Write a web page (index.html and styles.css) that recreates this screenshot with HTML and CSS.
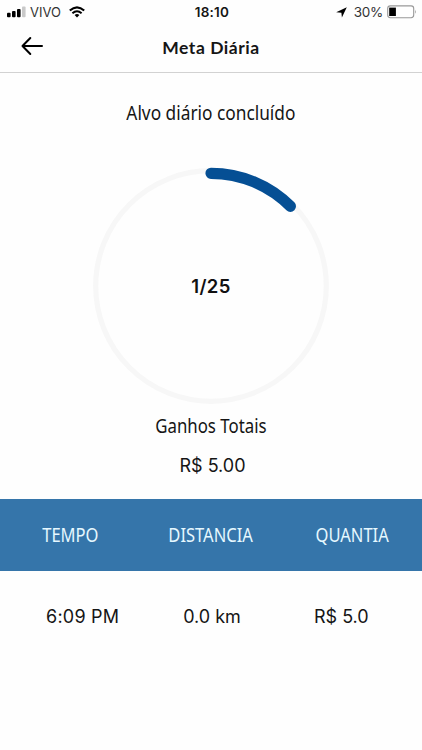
FILE: index.html
```html
<!DOCTYPE html>
<html lang="pt-BR">
<head>
  <meta charset="UTF-8" />
  <meta name="viewport" content="width=device-width, initial-scale=1" />
  <title>Meta Diária</title>
  <link rel="stylesheet" href="styles.css">
</head>
<body>
  <div class="status-bar">
    <div class="status-left">
      <svg class="signal" width="19" height="12" viewBox="0 0 19 12">
        <rect x="0" y="6.7" width="3.6" height="4.6" rx="1" />
        <rect x="5" y="5" width="3.6" height="6.3" rx="1" />
        <rect x="10" y="3" width="3.6" height="8.3" rx="1" />
        <rect x="15" y="0.5" width="3.6" height="10.8" rx="1" fill="#c9c9c9" />
      </svg>
      <span class="carrier">VIVO</span>
      <svg class="wifi" width="16" height="12" viewBox="0 0 16 12">
        <path d="M0.8 4.6 Q8 -2 15.2 4.6" fill="none" stroke="#000" stroke-width="2.1" />
        <path d="M3.4 7.3 Q8 3.2 12.6 7.3" fill="none" stroke="#000" stroke-width="2" />
        <path d="M5.6 8.9 Q8 6.9 10.4 8.9 L8 11.4 Z" />
      </svg>
    </div>
    <span class="clock">18:10</span>
    <div class="status-right">
      <svg class="location" width="11" height="11" viewBox="0 0 11 11">
        <path d="M10.8 0.2 L5.9 10.6 L5.4 5.8 L0.2 5.3 Z" />
      </svg>
      <span class="percent">30%</span>
      <svg class="battery" width="30" height="14" viewBox="0 0 30 14">
        <rect x="0.7" y="0.9" width="26" height="11.8" rx="2.6" fill="#fff" stroke="#999" stroke-width="1.1" />
        <rect x="2.2" y="2.6" width="6.7" height="8.4" />
        <path d="M28 4.8 Q29.6 6.8 28 8.8 Z" fill="#999" />
      </svg>
    </div>
  </div>
  <header>
    <svg class="back" width="23" height="20" viewBox="0 0 23 20">
      <path d="M21 10 H1.5 M9.3 2 L1.5 10 L9.3 18" />
    </svg>
    <h1>Meta Diária</h1>
  </header>
  <main>
    <h2 class="target">Alvo diário concluído</h2>
    <div class="ring">
      <svg width="240" height="240" viewBox="0 0 240 240">
        <circle class="track" cx="120" cy="120" r="115.3" />
        <path class="progress" d="M120 7.3 A112.2 112.2 0 0 1 199.4 40.3" />
      </svg>
      <span class="count">1/25</span>
    </div>
    <h2 class="total">Ganhos Totais</h2>
    <p class="amount">R$ 5.00</p>
  </main>
  <div class="row head">
    <span>TEMPO</span>
    <span>DISTANCIA</span>
    <span>QUANTIA</span>
  </div>
  <div class="row data">
    <span>6:09 PM</span>
    <span>0.0 km</span>
    <span>R$ 5.0</span>
  </div>
</body>
</html>
```
FILE: styles.css
```css
body {
  margin: 0;
  height: 750px;
  overflow: hidden;
  background: #fefefe;
  color: #151515;
  font-family: Inter, "Liberation Sans", sans-serif;
}
svg {
  display: block;
  flex: none;
}
.status-bar {
  display: grid;
  grid-template-columns: 1fr auto 1fr;
  align-items: center;
  height: 24px;
  padding: 0 5px 0 7px;
}
.status-left, .status-right {
  display: flex;
  align-items: center;
}
.status-right {
  justify-content: flex-end;
}
.carrier {
  margin: 0 8px 0 4px;
  font-size: 13px;
  color: #333;
}
.clock {
  font-size: 13.5px;
  font-weight: 600;
  letter-spacing: 0.2px;
}
.location {
  margin-right: 7px;
}
.percent {
  margin-right: 4px;
  font-size: 13.5px;
  letter-spacing: -0.3px;
  color: #333;
}
header {
  display: grid;
  grid-template-columns: 60px 1fr 60px;
  align-items: center;
  height: 48px;
  border-bottom: 1px solid #d2d2d2;
}
.back {
  margin-left: 21px;
  margin-bottom: 4px;
  fill: none;
  stroke: #000;
  stroke-width: 2;
  stroke-linecap: round;
  stroke-linejoin: round;
}
h1 {
  margin: 0;
  text-align: center;
  font: bold 17.5px/48px Lato, sans-serif;
  letter-spacing: 0.55px;
}
main {
  display: flex;
  flex-direction: column;
  align-items: center;
  height: 426px;
}
h2 {
  margin: 0;
  font: 19px/26px "Noto Sans", sans-serif;
  white-space: nowrap;
}
.target {
  margin-top: 27px;
  transform: scaleX(0.91);
}
.ring {
  display: grid;
  place-items: center;
  margin-top: 40px;
}
.ring > * {
  grid-area: 1 / 1;
}
.track {
  fill: none;
  stroke: #f7f7f7;
  stroke-width: 5.2;
}
.progress {
  fill: none;
  stroke: #054f94;
  stroke-width: 11.2;
  stroke-linecap: round;
}
.count {
  font-size: 18.5px;
  font-weight: 600;
  letter-spacing: 0.4px;
  color: #111;
}
.total {
  margin-top: 7px;
  transform: scaleX(0.885);
}
.amount {
  margin: 15px 0 0;
  padding-left: 3px;
  font-size: 18px;
  line-height: 24px;
}
.row {
  display: grid;
  grid-template-columns: repeat(3, 1fr);
  align-items: center;
  justify-items: center;
}
.head {
  height: 72px;
  background: #3575aa;
  color: #e6f8ff;
  font: 19px/26px "Noto Sans", sans-serif;
}
.head span {
  transform: scaleX(0.87);
}
.data {
  height: 90px;
  padding: 0 16px 0 18px;
  font-size: 18px;
}
.data span:first-child {
  letter-spacing: 0.2px;
}
```
